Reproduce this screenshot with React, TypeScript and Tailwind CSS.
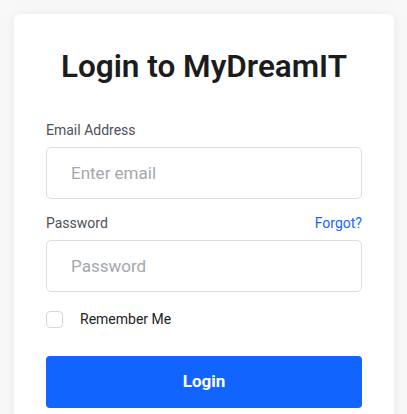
import React from "react";

export default function App() {
  return (
    <div className="min-h-screen w-full bg-[#f8f8f8] font-['Roboto',sans-serif] pt-[14px] px-[14px]">
      <div className="w-[380px] h-[420px] bg-white rounded-[6px] shadow-[0_0_12px_rgba(0,0,0,0.06)] px-[32px] pt-[34px]">
        <h1 className="text-center text-[31.5px] leading-[37px] font-semibold text-[#1c1c1e]">
          Login to MyDreamIT
        </h1>
        <div className="mt-[35px] flex flex-col">
          <label className="text-[14px] leading-[20px] font-normal text-[#4d5159]">Email Address</label>
          <input
            type="email"
            placeholder="Enter email"
            className="mt-[7px] h-[52px] w-full rounded-[5px] border border-[#dcdde0] px-[24px] text-[17px] placeholder:text-[#a3a7ae] outline-none"
          />
          <div className="mt-[14px] flex items-center justify-between">
            <label className="text-[14px] leading-[20px] font-normal text-[#4d5159]">Password</label>
            <a className="text-[14px] leading-[20px] font-normal text-[#1366ff]">Forgot?</a>
          </div>
          <input
            type="password"
            placeholder="Password"
            className="mt-[7px] h-[52px] w-full rounded-[5px] border border-[#dcdde0] px-[24px] text-[17px] placeholder:text-[#a3a7ae] outline-none"
          />
          <div className="mt-[18px] flex items-center h-[18px]">
            <span className="w-[17px] h-[17px] rounded-[4px] border-[1.5px] border-[#d6d7db] bg-white" />
            <span className="ml-[17px] text-[14px] text-[#222326]">Remember Me</span>
          </div>
          <button className="mt-[28px] h-[52px] w-full rounded-[4px] bg-[#1264ff] text-white text-[17px] font-bold">
            Login
          </button>
        </div>
      </div>
    </div>
  );
}
